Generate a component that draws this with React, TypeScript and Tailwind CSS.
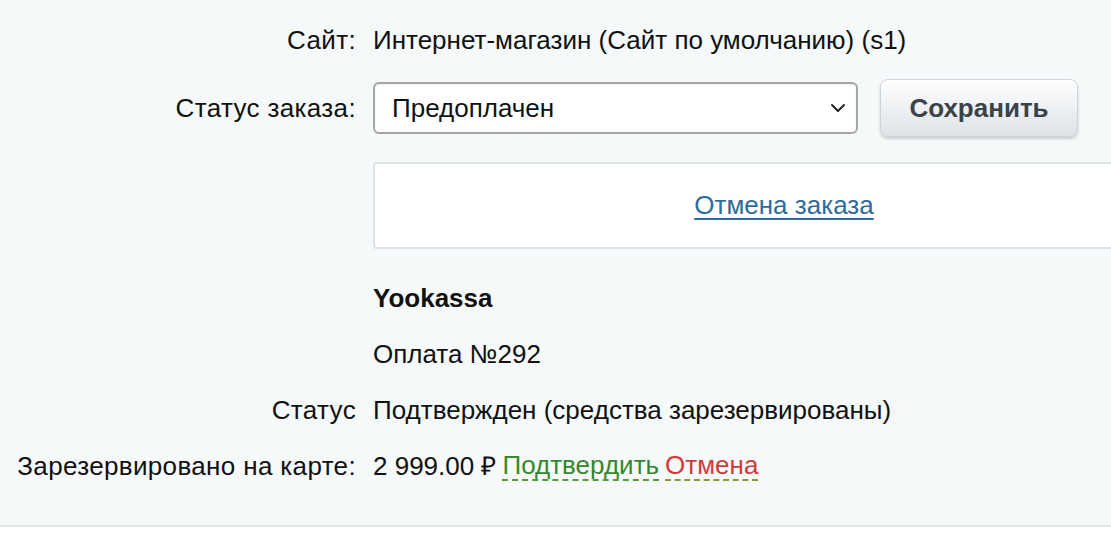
import { ChevronDown } from "lucide-react";

const Label = ({ children }: { children?: React.ReactNode }) => (
  <div className="w-[356px] shrink-0 text-right tracking-[0.35px]">{children}</div>
);

const Row = ({ label, children, className = "h-[56px]" }: { label?: string; children: React.ReactNode; className?: string }) => (
  <div className={`flex items-center gap-[17px] ${className}`}>
    <Label>{label}</Label>
    <div className="flex items-center whitespace-nowrap">{children}</div>
  </div>
);

export default function App() {
  return (
    <div className="w-[1111px] h-[555px] overflow-hidden bg-white font-['Liberation_Sans',Arial,sans-serif] text-[26px] text-[#111]">
      <div className="h-[527px] bg-[#f5f9f9] border-b-[2px] border-[#e0e6e6] pt-[14px]">
        <Row label="Сайт:" className="h-[52px]">
          Интернет-магазин (Сайт по умолчанию) (s1)
        </Row>

        <Row label="Статус заказа:" className="h-[58px] mt-[13px]">
          <div className="relative w-[485px] h-[52px] rounded-[6px] border-2 border-[#a6a6a6] bg-white flex items-center pl-[17px] shadow-[inset_0_1px_2px_rgba(0,0,0,0.08)]">
            Предоплачен
            <ChevronDown size={24} strokeWidth={2} className="absolute right-[6px] top-[12px] text-[#222]" />
          </div>
          <button className="ml-[22px] w-[198px] h-[58px] rounded-[8px] border border-[#cdd4d7] bg-gradient-to-b from-white to-[#dde3e6] shadow-[0_2px_3px_rgba(0,0,0,0.18)] font-bold text-[#3b4248]">
            Сохранить
          </button>
        </Row>

        <div className="flex mt-[25px]">
          <div className="w-[373px] shrink-0" />
          <div className="w-[822px] h-[87px] shrink-0 bg-white border-[2px] border-[#dde3e4] rounded-[3px] flex items-center justify-center">
            <a href="#" className="text-[#2f6b9c] underline underline-offset-[4px]">
              Отмена заказа
            </a>
          </div>
        </div>

        <div className="mt-[21px]">
          <Row>
            <span className="font-bold">Yookassa</span>
          </Row>
          <Row>Оплата №292</Row>
          <Row label="Статус">Подтвержден (средства зарезервированы)</Row>
          <Row label="Зарезервировано на карте:">
            <span>2 999.00 ₽</span>
            <span className="ml-[6px] text-[#36882c] border-b-[2px] border-dashed border-[#5a9a3a] leading-[28px]">
              Подтвердить
            </span>
            <span className="ml-[6px] text-[#d23a3a] border-b-[2px] border-dashed border-[#8a9a3a] leading-[28px]">
              Отмена
            </span>
          </Row>
        </div>
      </div>
    </div>
  );
}
